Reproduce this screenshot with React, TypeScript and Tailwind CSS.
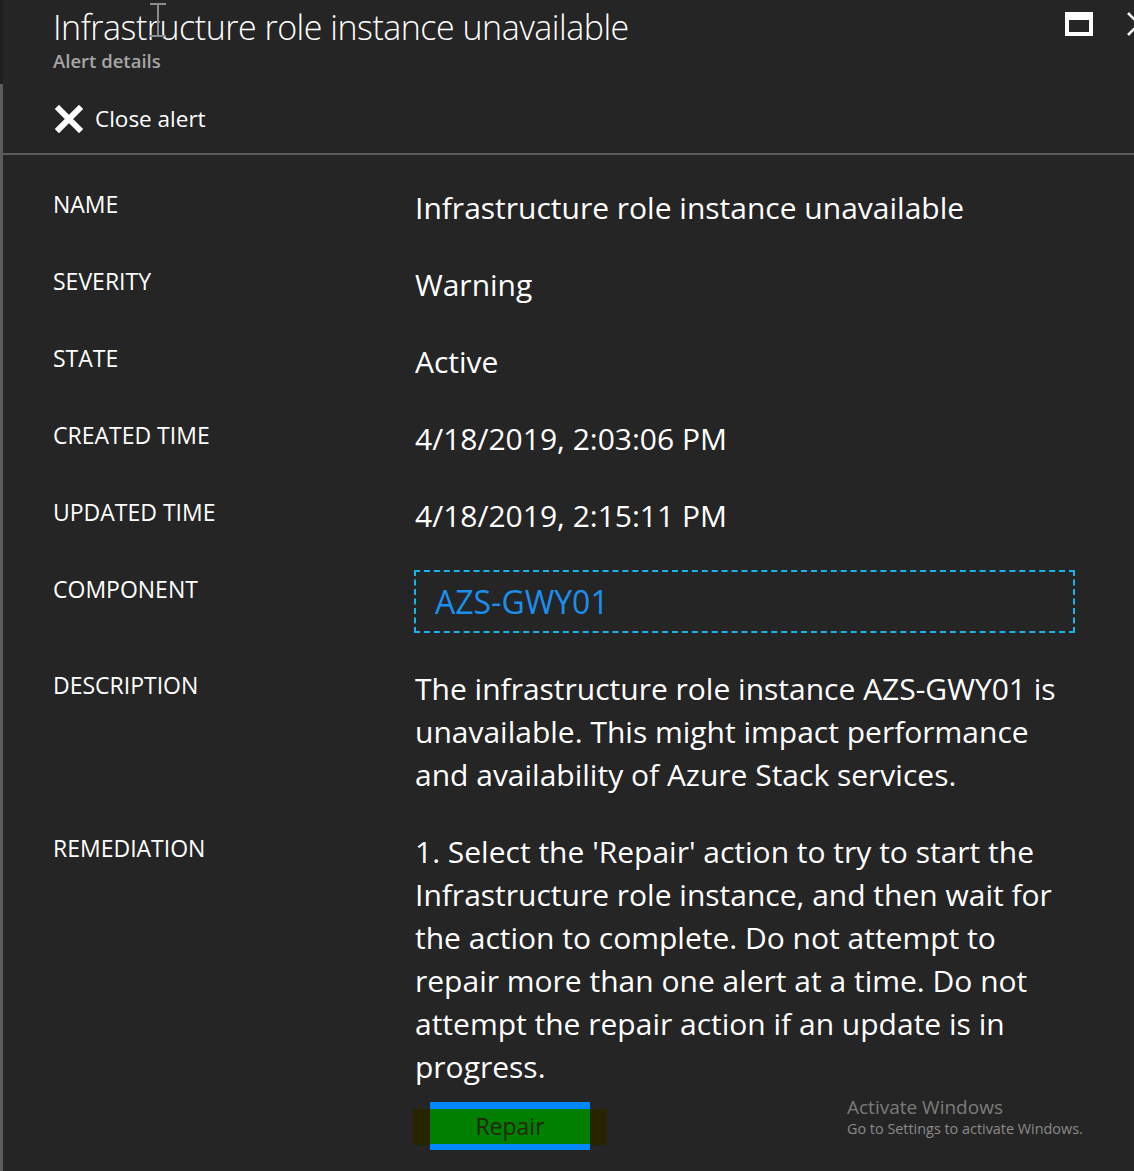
import { useState } from "react";

const rows = [
  { label: "NAME", value: "Infrastructure role instance unavailable" },
  { label: "SEVERITY", value: "Warning" },
  { label: "STATE", value: "Active" },
  { label: "CREATED TIME", value: "4/18/2019, 2:03:06 PM" },
  { label: "UPDATED TIME", value: "4/18/2019, 2:15:11 PM" },
];

const description = [
  "The infrastructure role instance AZS-GWY01 is",
  "unavailable. This might impact performance",
  "and availability of Azure Stack services.",
];

const remediation = [
  "1. Select the 'Repair' action to try to start the",
  "Infrastructure role instance, and then wait for",
  "the action to complete. Do not attempt to",
  "repair more than one alert at a time. Do not",
  "attempt the repair action if an update is in",
  "progress.",
];

function Label({ children }: { children: string }) {
  return <div className="-mt-[3px] text-[23px] leading-[43px] text-white">{children}</div>;
}

export default function App() {
  const [open] = useState(true);

  return (
    <div
      className="relative flex h-[1171px] w-[1134px] overflow-hidden bg-[#252525] text-white"
      style={{ fontFamily: "'Open Sans', 'Noto Sans', sans-serif" }}
    >
      {/* left blade edge */}
      <div className="flex w-[3px] shrink-0 flex-col">
        <div className="h-[84px] bg-[#1f1f1f]" />
        <div className="flex-1 bg-[#5c5c5c]" />
      </div>

      <div className="flex min-w-0 flex-1 flex-col">
        {/* Header */}
        <header className="relative h-[153px] pl-[50px]">
          <h1 className="pt-[4px] text-[34px] font-light leading-[46px] tracking-[-0.5px] text-white">
            Infrastructure role instance unavailable
          </h1>
          <div className="text-[18.5px] font-semibold leading-[22px] text-[#a6a6a6]">Alert details</div>

          <button className="mt-[32px] flex items-center gap-[12px] text-[22.5px] leading-[30px] text-white">
            <svg width="28" height="28" viewBox="0 0 28 28" className="ml-[2px]">
              <path d="M4 4 L24 24 M24 4 L4 24" stroke="#fff" strokeWidth="6" strokeLinecap="square" />
            </svg>
            Close alert
          </button>

          {/* window controls */}
          <div className="absolute right-0 top-[12px] flex items-start gap-[34px]">
            <div className="h-[24px] w-[28px] border-x-[4px] border-b-[4px] border-t-[8px] border-white" />
            <svg width="7" height="24" viewBox="0 0 7 24">
              <path d="M1 1 L12 12 M1 23 L12 12" stroke="#fff" strokeWidth="2.5" />
            </svg>
          </div>

          {/* text cursor */}
          <svg width="20" height="34" viewBox="0 0 20 34" className="absolute left-[145px] top-[3px]">
            <path d="M2 1 H18 M10 1 V33 M2 33 H18" stroke="#8a8a8a" strokeWidth="2" fill="none" />
          </svg>
        </header>

        <div className="h-[2px] bg-[#5c5c5c]" />

        {/* Properties */}
        {open && (
          <div className="flex flex-col gap-[34px] pl-[50px] pr-[59px] pt-[31px]">
            {rows.map((r) => (
              <div key={r.label} className="grid grid-cols-[362px_1fr]">
                <Label>{r.label}</Label>
                <div className="text-[30px] leading-[43px]">{r.value}</div>
              </div>
            ))}

            <div className="grid grid-cols-[362px_1fr]">
              <Label>COMPONENT</Label>
              <a className="-ml-[1px] -mt-[1px] flex h-[63px] items-center border-2 border-dashed border-[#19b4ee] pl-[19px] text-[32px] text-[#1a8fee]">
                AZS-GWY01
              </a>
            </div>

            <div className="grid grid-cols-[362px_1fr]">
              <Label>DESCRIPTION</Label>
              <div className="text-[30px] leading-[43px]">
                {description.map((l) => (
                  <div key={l}>{l}</div>
                ))}
              </div>
            </div>

            <div className="grid grid-cols-[362px_1fr]">
              <Label>REMEDIATION</Label>
              <div>
                <div className="text-[30px] leading-[43px]">
                  {remediation.map((l) => (
                    <div key={l}>{l}</div>
                  ))}
                </div>
                <div className="-ml-[2px] mt-[21px] inline-flex h-[36px] items-center bg-[#272400] px-[17px]">
                  <button className="-mt-[8px] -mb-[5px] flex h-[48px] w-[160px] items-center justify-center border-b-[6px] border-t-[7px] border-[#0088ff] bg-[#008000] text-[23px] text-[#262600]">
                    Repair
                  </button>
                </div>
              </div>
            </div>
          </div>
        )}
      </div>

      {/* Windows activation watermark */}
      <div className="absolute left-[847px] top-[1095px] text-[#7c7c7c]">
        <div className="text-[19px] leading-[24px]">Activate Windows</div>
        <div className="text-[14.4px] leading-[20px] text-[#8a8a8a]">Go to Settings to activate Windows.</div>
      </div>
    </div>
  );
}
